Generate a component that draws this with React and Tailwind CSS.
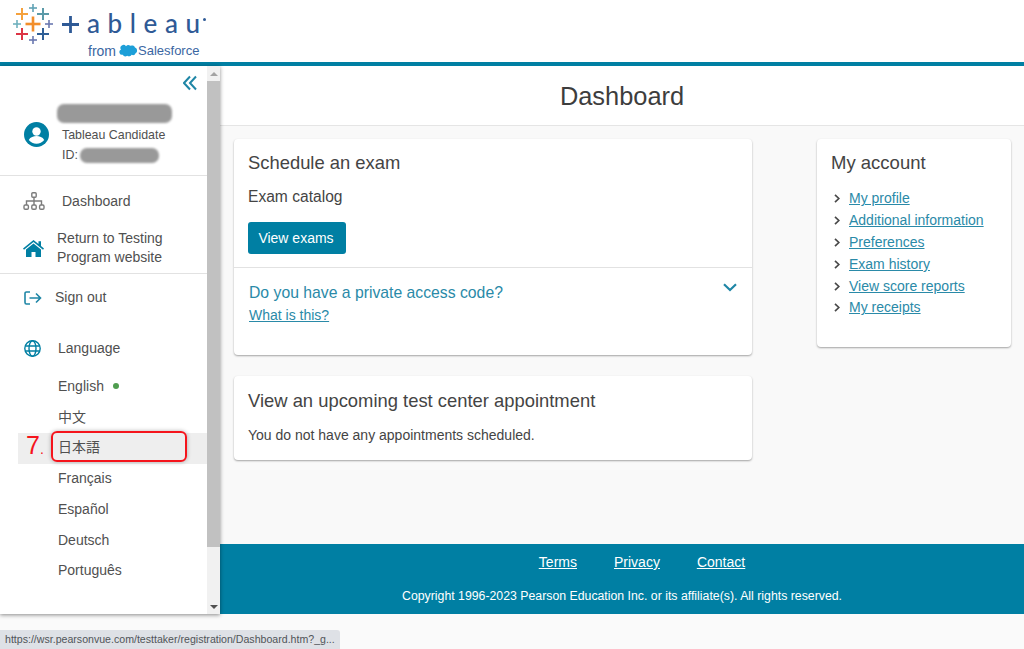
import React from "react";

function Plus({ x, y, s, w, c }) {
  return (
    <g stroke={c} strokeWidth={w}>
      <line x1={x - s} y1={y} x2={x + s} y2={y} />
      <line x1={x} y1={y - s} x2={x} y2={y + s} />
    </g>
  );
}

function LogoMark() {
  return (
    <svg width="44" height="46" viewBox="12 0 44 46" className="shrink-0">
      <Plus x={33} y={24} s={7.5} w={2.6} c="#f28e2b" />
      <Plus x={22} y={14} s={6} w={2} c="#f5a13c" />
      <Plus x={43} y={14} s={6} w={2} c="#5b9aa8" />
      <Plus x={33} y={8} s={4} w={1.6} c="#5fa2b5" />
      <Plus x={17} y={24} s={4} w={1.6} c="#6fb0bd" />
      <Plus x={49} y={24} s={4} w={1.6} c="#6a78b0" />
      <Plus x={22} y={34} s={6} w={2} c="#dc3545" />
      <Plus x={43} y={34} s={6} w={2} c="#2f5f97" />
      <Plus x={33} y={40} s={4} w={1.6} c="#6a78b0" />
    </svg>
  );
}

function Cloud() {
  return (
    <svg width="18" height="14" viewBox="0 0 18 14" className="inline-block">
      <path d="M7 2.2a3 3 0 0 1 4.3-.4A3.3 3.3 0 0 1 16 3.6a3.1 3.1 0 0 1 .6 5.6 3 3 0 0 1-4 1.6 2.9 2.9 0 0 1-4.3.9 3.2 3.2 0 0 1-4.6-1A2.7 2.7 0 0 1 2 5.6a2.9 2.9 0 0 1 5-3.4Z" fill="#1d9fd8" />
    </svg>
  );
}

function Logo() {
  return (
    <div className="relative flex h-[62px] shrink-0 bg-white pl-[12px]">
      <LogoMark />
      <div className="ml-[6px] flex flex-col">
        <div className="flex h-[44px] items-center text-[#2f5a96]">
          <svg width="17" height="17" viewBox="0 0 17 17" className="mr-[8px] mt-[4px]">
            <path d="M0 8.5H17M8.5 0V17" stroke="#2f5a96" strokeWidth="2.8" />
          </svg>
          <span className="mt-[2px] font-['Lato',sans-serif] text-[26px] font-medium leading-none tracking-[7.6px]">ableau</span>
          <span className="ml-[-5px] mt-[-6px] h-[3px] w-[3px] rounded-full bg-[#2f5a96]" />
        </div>
        <div className="ml-[26px] flex items-center font-['Liberation_Sans',sans-serif] leading-[14px] text-[#3a66a2]">
          <span className="text-[14px]">from</span>
          <span className="ml-[3px] mr-[1px] flex"><Cloud /></span>
          <span className="text-[13px]">Salesforce</span>
        </div>
      </div>
    </div>
  );
}

function Blur({ className }) {
  return <div className={"rounded-[7px] bg-[#999999] blur-[1px] " + className} />;
}

function Divider() {
  return <div className="h-px bg-[#e2e2e2]" />;
}

function LangRow({ children }) {
  return <div className="flex h-[30.7px] items-center pl-[58px]">{children}</div>;
}

function Sidebar() {
  return (
    <aside className="relative z-10 flex h-[548px] w-[220px] shrink-0 bg-white shadow-[0_1px_4px_rgba(0,0,0,0.45)]">
      <div className="flex w-[207px] flex-col text-[14px] text-[#505050]">
        <div className="flex h-[38px] justify-end pr-[10px] pt-[9px]">
          <svg width="14" height="16" viewBox="0 0 14 16" fill="none" stroke="#1f86a6" strokeWidth="2">
            <path d="M7 1.5 1 8l6 6.5M13 1.5 7 8l6 6.5" />
          </svg>
        </div>
        <div className="flex h-[71px] items-start pl-[24px]">
          <svg width="25" height="25" viewBox="0 0 25 25" className="mt-[18px]">
            <circle cx="12.5" cy="12.5" r="12.5" fill="#007fa3" />
            <circle cx="12.5" cy="9.5" r="4.2" fill="#fff" />
            <path d="M4.8 18c1.5-3 4.8-4 7.7-4s6.2 1 7.7 4a9.8 9.8 0 0 1-15.4 0Z" fill="#fff" />
          </svg>
          <div className="ml-[13px] flex flex-col">
            <Blur className="ml-[-5px] h-[19px] w-[115px]" />
            <div className="mt-[2px] text-[12.4px] leading-[20px]">Tableau Candidate</div>
            <div className="flex items-center text-[12.4px] leading-[20px]">
              ID:<Blur className="ml-[2px] h-[15px] w-[79px]" />
            </div>
          </div>
        </div>
        <Divider />
        <div className="flex h-[50px] items-center pl-[23px]">
          <svg width="22" height="18" viewBox="0 0 22 18" fill="none" stroke="#7c7c7c" strokeWidth="1.4">
            <rect x="8.8" y="0.8" width="4.4" height="4.4" rx="1" />
            <path d="M11 5.2V9M3.5 13V9h15v4M11 9v4" />
            <rect x="1" y="13" width="4.4" height="4.2" rx="1.2" />
            <rect x="8.8" y="13" width="4.4" height="4.2" rx="1.2" />
            <rect x="16.6" y="13" width="4.4" height="4.2" rx="1.2" />
          </svg>
          <span className="ml-[17px]">Dashboard</span>
        </div>
        <div className="flex h-[47px] items-center pl-[23px]">
          <svg width="21" height="17" viewBox="0 0 21 17" fill="#007fa3" className="mt-[-3px]">
            <path d="M10.5 0 0 8.6l1 1.1L10.5 2 20 9.7l1-1.1-3-2.5V1.2h-2.5v2.9L10.5 0Z" />
            <path d="M10.5 3.6 3 9.6V17h5.5v-5h4v5H18V9.6l-7.5-6Z" />
          </svg>
          <span className="ml-[13px] mt-[-4px] leading-[19px]">Return to Testing<br />Program website</span>
        </div>
        <Divider />
        <div className="flex h-[47px] items-center pl-[24px]">
          <svg width="18" height="14" viewBox="0 0 18 14" fill="none" stroke="#1f86a6" strokeWidth="1.6" className="mt-[1px]">
            <path d="M6 1H2.4C1.6 1 1 1.6 1 2.4v9.2c0 .8.6 1.4 1.4 1.4H6" />
            <path d="M5.5 7H16.5M12 2.5 16.5 7 12 11.5" />
          </svg>
          <span className="ml-[13px]">Sign out</span>
        </div>
        <div className="mt-[13px] flex h-[28px] items-center pl-[24px]">
          <svg width="17" height="17" viewBox="0 0 17 17" fill="none" stroke="#007fa3" strokeWidth="1.4">
            <circle cx="8.5" cy="8.5" r="7.7" />
            <ellipse cx="8.5" cy="8.5" rx="3.5" ry="7.7" />
            <path d="M1.2 6h14.6M1.2 11h14.6" />
          </svg>
          <span className="ml-[17px]">Language</span>
        </div>
        <div className="mt-[9px] flex flex-col">
          <LangRow><span>English</span><span className="ml-[9px] h-[6px] w-[6px] rounded-full bg-[#4f9d4f]" /></LangRow>
          <LangRow>中文</LangRow>
          <div className="relative mb-[-1px] ml-[18px] mt-[1px] flex h-[31px] items-center bg-[#eeeeee] pl-[40px]">
            <span className="mt-[-3px]">日本語</span>
            <div className="absolute left-[33px] top-[-2px] h-[31px] w-[136px] rounded-[6px] border-2 border-[#f5141c] shadow-[0_0_4px_rgba(0,0,0,0.3)]" />
            <span className="absolute left-[8px] top-[-3px] text-[25px] leading-[31px] text-[#f5141c]">7<span className="text-[14px]">.</span></span>
          </div>
          <LangRow>Français</LangRow>
          <LangRow>Español</LangRow>
          <LangRow>Deutsch</LangRow>
          <LangRow>Português</LangRow>
        </div>
      </div>
      <div className="flex w-[13px] flex-col items-center bg-[#f1f1f1]">
        <div className="flex h-[15px] items-center justify-center">
          <div className="h-0 w-0 border-x-[4px] border-b-[4px] border-x-transparent border-b-[#a3a3a3]" />
        </div>
        <div className="h-[466px] w-full bg-[#c1c1c1]" />
        <div className="flex-1" />
        <div className="flex h-[15px] items-center justify-center">
          <div className="h-0 w-0 border-x-[4px] border-t-[4px] border-x-transparent border-t-[#505050]" />
        </div>
      </div>
    </aside>
  );
}

function Card({ className, children }) {
  return <section className={"rounded-[4px] bg-white shadow-[0_1px_2px_rgba(0,0,0,0.35)] " + className}>{children}</section>;
}

function Main() {
  const links = ["My profile", "Additional information", "Preferences", "Exam history", "View score reports", "My receipts"];
  return (
    <main className="flex h-[548px] min-w-0 flex-1 flex-col">
      <div className="flex h-[60px] shrink-0 items-center justify-center border-b border-[#e5e5e5] bg-white pt-[2px] text-[25.4px] text-[#3d3d3d]">
        Dashboard
      </div>
      <div className="flex flex-1 gap-[65px] bg-[#f9f9f9] pl-[14px] pt-[13px]">
        <div className="flex w-[518px] flex-col gap-[21px]">
          <Card className="h-[216px]">
            <div className="h-[128px] px-[14px] pt-[12px]">
              <h2 className="text-[18.4px] leading-[24px] text-[#444444]">Schedule an exam</h2>
              <p className="mt-[12px] text-[15.6px] leading-[20px] text-[#444444]">Exam catalog</p>
              <button className="mt-[15px] h-[32px] w-[98px] rounded-[3px] bg-[#007fa3] pr-[2px] text-[14px] text-white">View exams</button>
            </div>
            <Divider />
            <div className="relative px-[15px] pt-[14px]">
              <div className="text-[15.75px] leading-[21px] text-[#2a8aa8]">Do you have a private access code?</div>
              <a className="mt-[2px] block text-[14px] leading-[20px] text-[#2a8aa8] underline">What is this?</a>
              <svg width="14" height="9" viewBox="0 0 14 9" fill="none" stroke="#1f86a6" strokeWidth="2.2" className="absolute right-[15px] top-[15px]">
                <path d="M1 1.2 7 7l6-5.8" />
              </svg>
            </div>
          </Card>
          <Card className="h-[84px] px-[14px] pt-[13px]">
            <h2 className="text-[18.4px] leading-[24px] text-[#444444]">View an upcoming test center appointment</h2>
            <p className="mt-[12px] text-[14px] leading-[20px] text-[#444444]">You do not have any appointments scheduled.</p>
          </Card>
        </div>
        <Card className="h-[208px] w-[194px] px-[14px] pt-[12px]">
          <h2 className="text-[18.5px] leading-[24px] text-[#444444]">My account</h2>
          <ul className="mt-[13px] flex flex-col">
            {links.map((l) => (
              <li key={l} className="flex h-[21.8px] items-center">
                <svg width="6" height="9" viewBox="0 0 6 9" fill="none" stroke="#4a4a4a" strokeWidth="1.7" className="ml-[3px]">
                  <path d="M1 .8 4.8 4.5 1 8.2" />
                </svg>
                <a className="ml-[9px] text-[14px] text-[#2a8aa8] underline">{l}</a>
              </li>
            ))}
          </ul>
        </Card>
      </div>
      <footer className="flex h-[70px] shrink-0 flex-col items-center bg-[#007fa3] text-white">
        <div className="ml-[40px] mt-[8px] flex gap-[37px] text-[14px] leading-[20px] underline">
          <a>Terms</a><a>Privacy</a><a>Contact</a>
        </div>
        <div className="mt-[15px] text-[12.3px] leading-[18px]">Copyright 1996-2023 Pearson Education Inc. or its affiliate(s). All rights reserved.</div>
      </footer>
    </main>
  );
}

export default function App() {
  return (
    <div className="relative flex h-[649px] w-[1024px] flex-col overflow-hidden bg-[#fafafa] font-['Liberation_Sans','Noto_Sans_CJK_JP',sans-serif]">
      <Logo />
      <div className="h-[4px] shrink-0 bg-[#007fa3]" />
      <div className="flex">
        <Sidebar />
        <Main />
      </div>
      <div className="absolute bottom-0 left-0 flex h-[19px] w-[340px] items-center whitespace-nowrap rounded-tr-[3px] bg-[#dee1e6] pl-[5px] text-[10.6px] text-[#505458]">
        https://wsr.pearsonvue.com/testtaker/registration/Dashboard.htm?_g...
      </div>
    </div>
  );
}
